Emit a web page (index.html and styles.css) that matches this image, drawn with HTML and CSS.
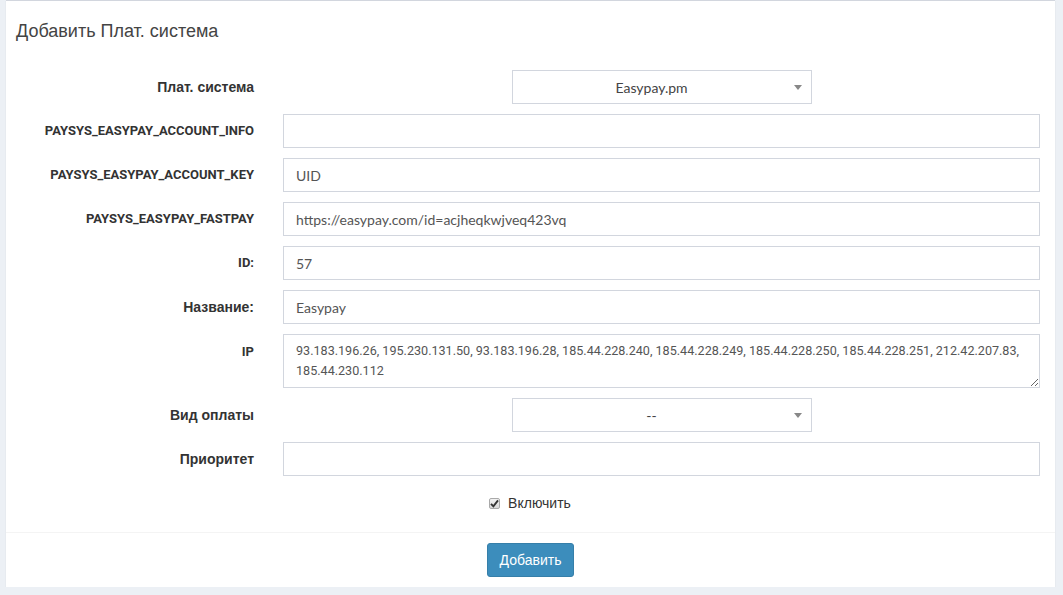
FILE: index.html
```html
<!DOCTYPE html>
<html lang="ru">
<head>
    <meta charset="UTF-8">
    <title>Добавить Плат. система</title>
    <link rel="stylesheet" href="styles.css">
</head>
<body>
    <div class="box">
        <div class="box-header">
            <h3 class="box-title">Добавить Плат. система</h3>
        </div>

        <form class="box-body">
            <div class="form-group">
                <label class="control-label">Плат. система</label>
                <div class="control center">
                    <div class="select">
                        <span>Easypay.pm</span>
                        <b class="caret"></b>
                    </div>
                </div>
            </div>
            <div class="form-group">
                <label class="control-label latin">PAYSYS_EASYPAY_ACCOUNT_INFO</label>
                <div class="control"><input class="form-control" type="text" value=""></div>
            </div>
            <div class="form-group">
                <label class="control-label latin">PAYSYS_EASYPAY_ACCOUNT_KEY</label>
                <div class="control"><input class="form-control" type="text" value="UID"></div>
            </div>
            <div class="form-group">
                <label class="control-label latin">PAYSYS_EASYPAY_FASTPAY</label>
                <div class="control"><input class="form-control" type="text" value="https://easypay.com/id=acjheqkwjveq423vq"></div>
            </div>
            <div class="form-group">
                <label class="control-label latin">ID:</label>
                <div class="control"><input class="form-control" type="text" value="57"></div>
            </div>
            <div class="form-group">
                <label class="control-label">Название:</label>
                <div class="control"><input class="form-control" type="text" value="Easypay"></div>
            </div>
            <div class="form-group top">
                <label class="control-label latin">IP</label>
                <div class="control"><textarea class="form-control" rows="2">93.183.196.26, 195.230.131.50, 93.183.196.28, 185.44.228.240, 185.44.228.249, 185.44.228.250, 185.44.228.251, 212.42.207.83, 185.44.230.112</textarea></div>
            </div>
            <div class="form-group">
                <label class="control-label">Вид оплаты</label>
                <div class="control center">
                    <div class="select">
                        <span>--</span>
                        <b class="caret"></b>
                    </div>
                </div>
            </div>
            <div class="form-group">
                <label class="control-label">Приоритет</label>
                <div class="control"><input class="form-control" type="text" value=""></div>
            </div>
            <div class="checkbox">
                <label>
                    <span class="check">
                        <svg width="9" height="9" viewBox="0 0 9 9"><path d="M1 4.8 L3.4 7.4 L8 1.4" fill="none" stroke="#333" stroke-width="1.9"/></svg>
                    </span>
                    Включить
                </label>
            </div>
        </form>

        <div class="box-footer">
            <button class="btn-primary" type="button">Добавить</button>
        </div>
    </div>
</body>
</html>
```

FILE: styles.css
```css
/* базовые стили */
body {
    margin: 0;
    background-color: #ecf0f5;
    font-family: "Liberation Sans", Arial, sans-serif;
    font-size: 14px;
    color: #333;
}

.box {
    margin-left: 6px;
    width: 1049px;
    background: #fff;
    border-top: 1px solid #d2d6de;
    box-shadow: 0 1px 1px rgba(0, 0, 0, 0.12);
}

.box-header {
    padding: 20px 10px;
}

.box-title {
    margin: 0;
    font-size: 18px;
    line-height: 20px;
    font-weight: normal;
    color: #444;
}

.box-body {
    display: flex;
    flex-direction: column;
    gap: 10px;
    padding: 9px 15px 12px 0;
}

.form-group {
    display: grid;
    grid-template-columns: 248px 1fr;
    column-gap: 29px;
    align-items: center;
}

.form-group.top {
    align-items: start;
}

.control-label {
    text-align: right;
    font-weight: bold;
    font-size: 14px;
    line-height: 20px;
    color: #333;
}

.control-label.latin {
    font-family: Roboto, sans-serif;
    font-size: 13px;
}

.form-group.top .control-label {
    padding-top: 8px;
}

.control.center {
    display: flex;
    justify-content: center;
}

.form-control {
    display: block;
    box-sizing: border-box;
    width: 100%;
    height: 34px;
    margin: 0;
    padding: 6px 12px;
    border: 1px solid #d2d6de;
    border-radius: 0;
    font-family: Lato, sans-serif;
    font-size: 14px;
    color: #555;
    background: #fff;
}

textarea.form-control {
    height: 54px;
    line-height: 20px;
    padding: 6px 12px;
    font-family: Roboto, sans-serif;
    font-size: 12.6px;
    resize: vertical;
}

.select {
    position: relative;
    box-sizing: border-box;
    width: 300px;
    height: 34px;
    border: 1px solid #d2d6de;
    display: flex;
    align-items: center;
    justify-content: center;
    padding-right: 20px;
    font-family: Lato, sans-serif;
    font-size: 14px;
    color: #444;
}

.caret {
    position: absolute;
    right: 9px;
    top: 14px;
    border-left: 4px solid transparent;
    border-right: 4px solid transparent;
    border-top: 5px solid #888;
}

.checkbox {
    height: 34px;
    display: flex;
    align-items: center;
    justify-content: center;
    padding-left: 14px;
}

.checkbox label {
    display: flex;
    align-items: center;
    gap: 8px;
    color: #333;
}

.check {
    box-sizing: border-box;
    width: 11px;
    height: 11px;
    border: 1px solid #a9a9a9;
    border-radius: 2px;
    background: linear-gradient(#f2f2f2, #d8d8d8);
    display: flex;
    align-items: center;
    justify-content: center;
}

.box-footer {
    border-top: 1px solid #f4f4f4;
    padding: 10px;
    text-align: center;
}

.btn-primary {
    height: 34px;
    padding: 0 12px;
    border: 1px solid #367fa9;
    border-radius: 3px;
    background-color: #3c8dbc;
    color: #fff;
    font-family: "Liberation Sans", Arial, sans-serif;
    font-size: 14px;
    cursor: pointer;
}
```
